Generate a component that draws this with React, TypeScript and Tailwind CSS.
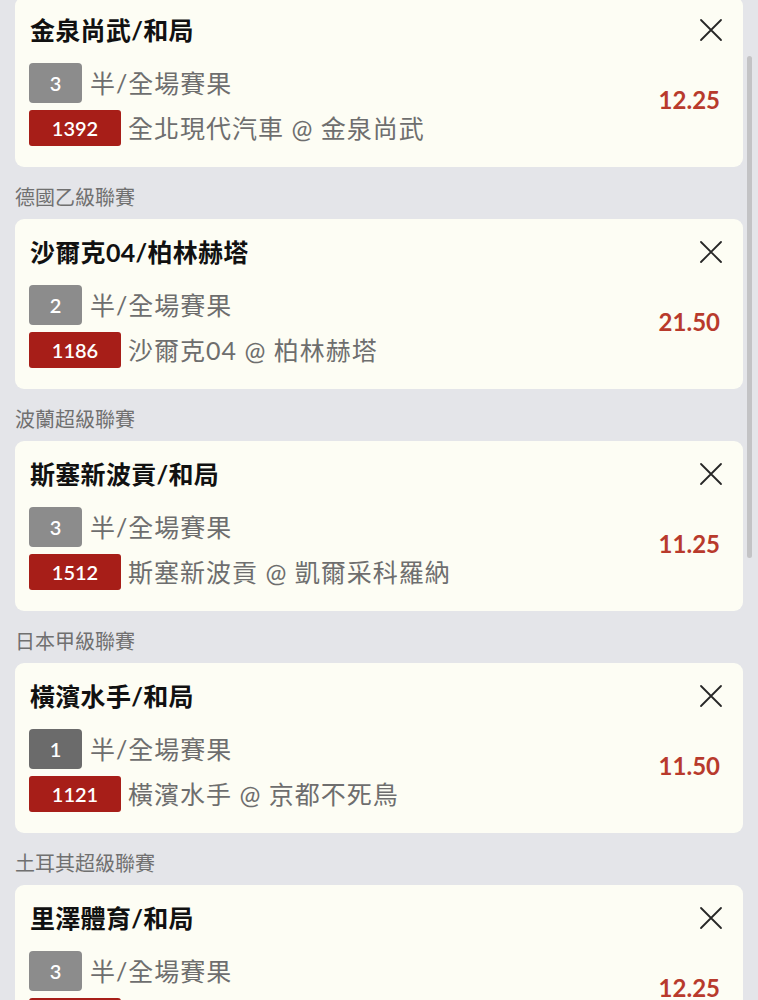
import React from "react";

interface Bet {
    league?: string;
    title: string;
    leg: string;
    legDark?: boolean;
    market: string;
    code: string;
    match: string;
    odds: string;
}

const bets: Bet[] = [
    { title: "金泉尚武/和局", leg: "3", market: "半/全場賽果", code: "1392", match: "全北現代汽車 @ 金泉尚武", odds: "12.25" },
    { league: "德國乙級聯賽", title: "沙爾克04/柏林赫塔", leg: "2", market: "半/全場賽果", code: "1186", match: "沙爾克04 @ 柏林赫塔", odds: "21.50" },
    { league: "波蘭超級聯賽", title: "斯塞新波貢/和局", leg: "3", market: "半/全場賽果", code: "1512", match: "斯塞新波貢 @ 凱爾采科羅納", odds: "11.25" },
    { league: "日本甲級聯賽", title: "橫濱水手/和局", leg: "1", legDark: true, market: "半/全場賽果", code: "1121", match: "橫濱水手 @ 京都不死鳥", odds: "11.50" },
    { league: "土耳其超級聯賽", title: "里澤體育/和局", leg: "3", market: "半/全場賽果", code: "1000", match: "里澤體育 @ 加拉塔沙雷", odds: "12.25" },
];

const CloseIcon = () => (
    <svg width="24" height="24" viewBox="0 0 24 24" fill="none" stroke="#262626" strokeWidth="1.8" strokeLinecap="round">
        <path d="M2 2L22 22M22 2L2 22" />
    </svg>
);

const BetCard = ({ bet }: { bet: Bet }) => (
    <div className="rounded-[9px] bg-[#fdfdf4] pl-[14px] pr-[23px] pt-[17px] pb-[21px] flex items-stretch">
        <div className="flex-1 flex flex-col">
            <div className="text-[25px] leading-[32px] font-bold text-[#111] pl-[1px] tracking-[0.3px]">{bet.title}</div>
            <div className="mt-[17px] flex items-center gap-[8px]">
                <div
                    className={`w-[53px] h-[40px] rounded-[4px] flex items-center justify-center text-white text-[20px] font-semibold ${bet.legDark ? "bg-[#6b6b6b]" : "bg-[#8c8c8c]"}`}
                >
                    {bet.leg}
                </div>
                <span className="text-[25px] leading-[32px] text-[#6e6e6e] tracking-[1px]">{bet.market}</span>
            </div>
            <div className="mt-[7px] flex items-center gap-[7px]">
                <div className="w-[92px] h-[36px] rounded-[3px] bg-[#a71e18] flex items-center justify-center text-white text-[20px] font-semibold">
                    {bet.code}
                </div>
                <span className="text-[25px] leading-[32px] text-[#6e6e6e] tracking-[1px]">{bet.match}</span>
            </div>
        </div>
        <div className="flex flex-col items-end">
            <div className="h-[32px] flex items-center -mr-[3px]">
                <CloseIcon />
            </div>
            <div className="flex-1 flex items-center pt-[8px]">
                <span className="text-[24px] font-bold text-[#b83a2c]">{bet.odds}</span>
            </div>
        </div>
    </div>
);

export default function App() {
    return (
        <div
            className="relative w-[758px] h-[1000px] overflow-hidden bg-[#e4e5e9]"
            style={{ fontFamily: "Lato, 'Noto Sans CJK TC', sans-serif" }}
        >
            <div className="-mt-[3px] pl-[15px] pr-[15px]">
                {bets.map((bet, i) => (
                    <div key={i}>
                        {bet.league && (
                            <div className="pt-[18px] pb-[10px] text-[20px] leading-[24px] text-[#707070]">{bet.league}</div>
                        )}
                        <BetCard bet={bet} />
                    </div>
                ))}
            </div>
            {/* scrollbar thumb */}
            <div className="absolute right-[6px] top-[56px] w-[5px] h-[502px] rounded-full bg-[#c3c3c5]" />
        </div>
    );
}
